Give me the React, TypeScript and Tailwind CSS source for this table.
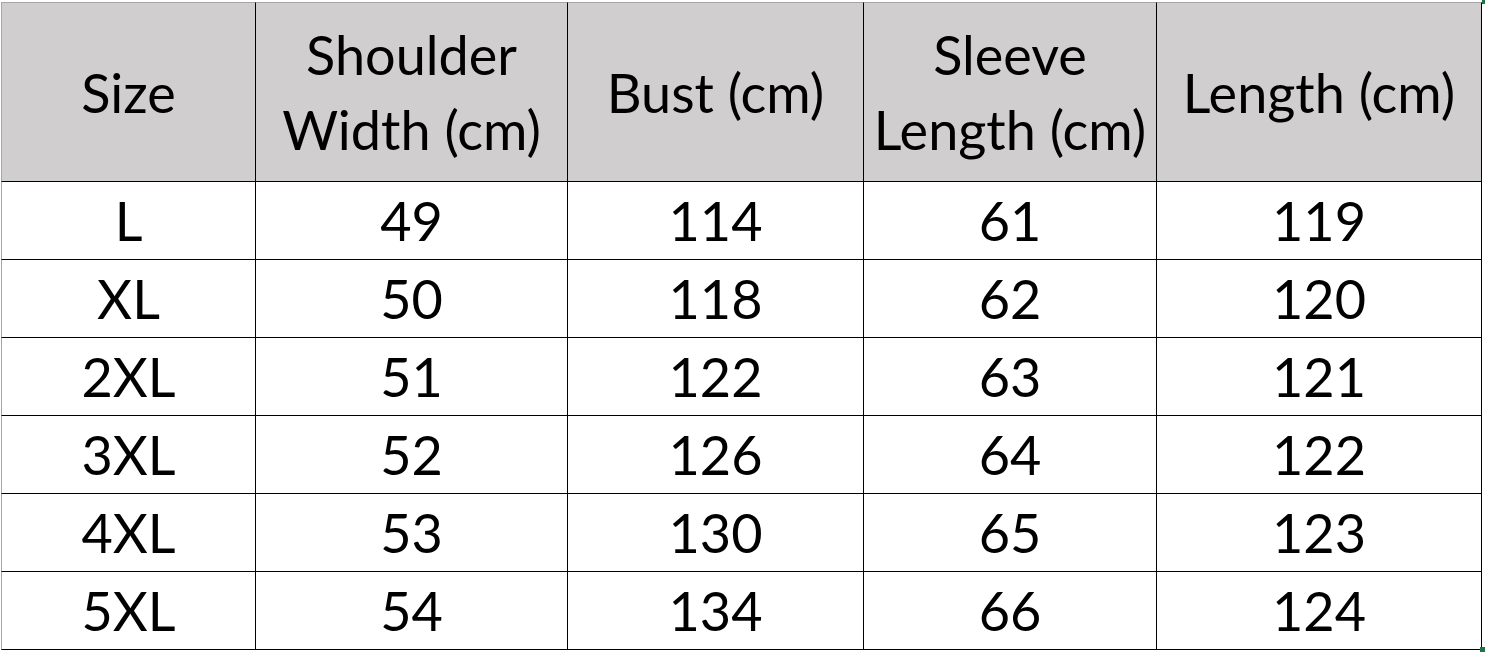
import React from "react";

const headers: string[][] = [
  ["Size"],
  ["Shoulder", "Width (cm)"],
  ["Bust (cm)"],
  ["Sleeve", "Length (cm)"],
  ["Length (cm)"],
];

const rows: string[][] = [
  ["L", "49", "114", "61", "119"],
  ["XL", "50", "118", "62", "120"],
  ["2XL", "51", "122", "63", "121"],
  ["3XL", "52", "126", "64", "122"],
  ["4XL", "53", "130", "65", "123"],
  ["5XL", "54", "134", "66", "124"],
];

export default function App() {
  return (
    <div className="w-[1485px] h-[653px] bg-white overflow-hidden relative pt-[2px] pl-[1px]" style={{ fontFamily: "Lato, 'Liberation Sans', sans-serif" }}>
      <div className="grid grid-cols-[255px_312px_296px_293px_325px] text-black text-[54px]">
        {headers.map((h, i) => (
          <div
            key={"h" + i}
            className={
              "h-[180px] bg-[#d0cece] border-t border-t-[#a6a6a6] border-b border-b-black border-r border-r-black flex flex-col items-center justify-center leading-[75px] " +
              (i === 0 ? "border-l border-l-[#a6a6a6]" : "")
            }
          >
            {h.map((line) => (
              <span key={line}>{line}</span>
            ))}
          </div>
        ))}
        {rows.map((r, ri) =>
          r.map((c, ci) => (
            <div
              key={ri + "-" + ci}
              className={
                "h-[78px] border-b border-b-black border-r border-r-black flex items-center justify-center leading-none " +
                (ci === 0 ? "border-l border-l-[#a6a6a6]" : "")
              }
            >
              {c}
            </div>
          ))
        )}
      </div>
      <div className="absolute left-[1480px] top-[647px] w-[5px] h-[5px] bg-[#217346]" />
      <div className="absolute left-[1482px] top-[0px] w-[3px] h-[4px] bg-[#217346]" />
    </div>
  );
}
